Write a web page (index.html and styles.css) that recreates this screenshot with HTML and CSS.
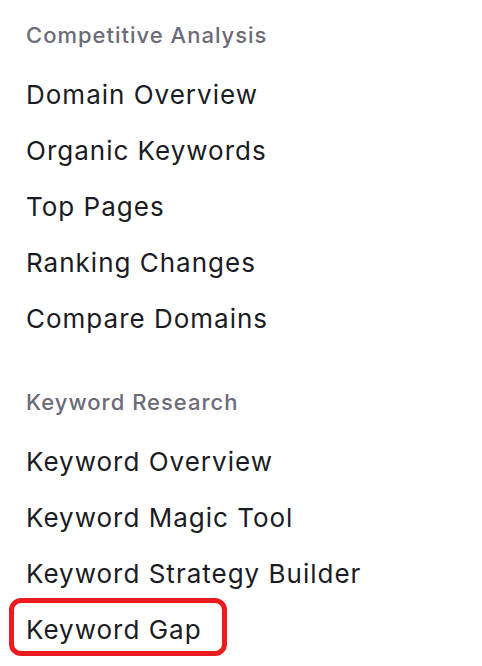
FILE: index.html
```html
<!DOCTYPE html>
<html>
<head>
<meta charset="utf-8">
<link rel="stylesheet" href="styles.css">
</head>
<body>
<nav class="menu">
  <section class="group">
    <h2 class="group-title">Competitive Analysis</h2>
    <ul class="items">
      <li class="item">Domain Overview</li>
      <li class="item">Organic Keywords</li>
      <li class="item">Top Pages</li>
      <li class="item">Ranking Changes</li>
      <li class="item">Compare Domains</li>
    </ul>
  </section>
  <section class="group group-second">
    <h2 class="group-title">Keyword Research</h2>
    <ul class="items">
      <li class="item">Keyword Overview</li>
      <li class="item">Keyword Magic Tool</li>
      <li class="item">Keyword Strategy Builder</li>
      <li class="item item-highlight">Keyword Gap</li>
    </ul>
  </section>
</nav>
</body>
</html>
```
FILE: styles.css
```css
*, *::before, *::after { box-sizing: border-box; }
html, body {
  margin: 0;
  padding: 0;
  background: #ffffff;
}
body {
  font-family: Inter, "Noto Sans", sans-serif;
  width: 482px;
  height: 666px;
  overflow: hidden;
}
.menu {
  padding: 21px 0 0 26px;
}
.group-title {
  margin: 0;
  font-size: 22px;
  line-height: 28px;
  font-weight: 500;
  letter-spacing: 1px;
  color: #6c6b77;
}
.items {
  list-style: none;
  margin: 18px 0 0 0;
  padding: 0;
}
.item {
  font-size: 26px;
  line-height: 56px;
  letter-spacing: 1px;
  color: #1b1b23;
  font-weight: 400;
}
.group-second {
  margin-top: 41px;
}
.item-highlight {
  position: relative;
}
.item-highlight::after {
  content: "";
  position: absolute;
  left: -17px;
  top: -4px;
  width: 218px;
  height: 58px;
  border: 5px solid #ec1b1f;
  border-radius: 12px;
}
```
